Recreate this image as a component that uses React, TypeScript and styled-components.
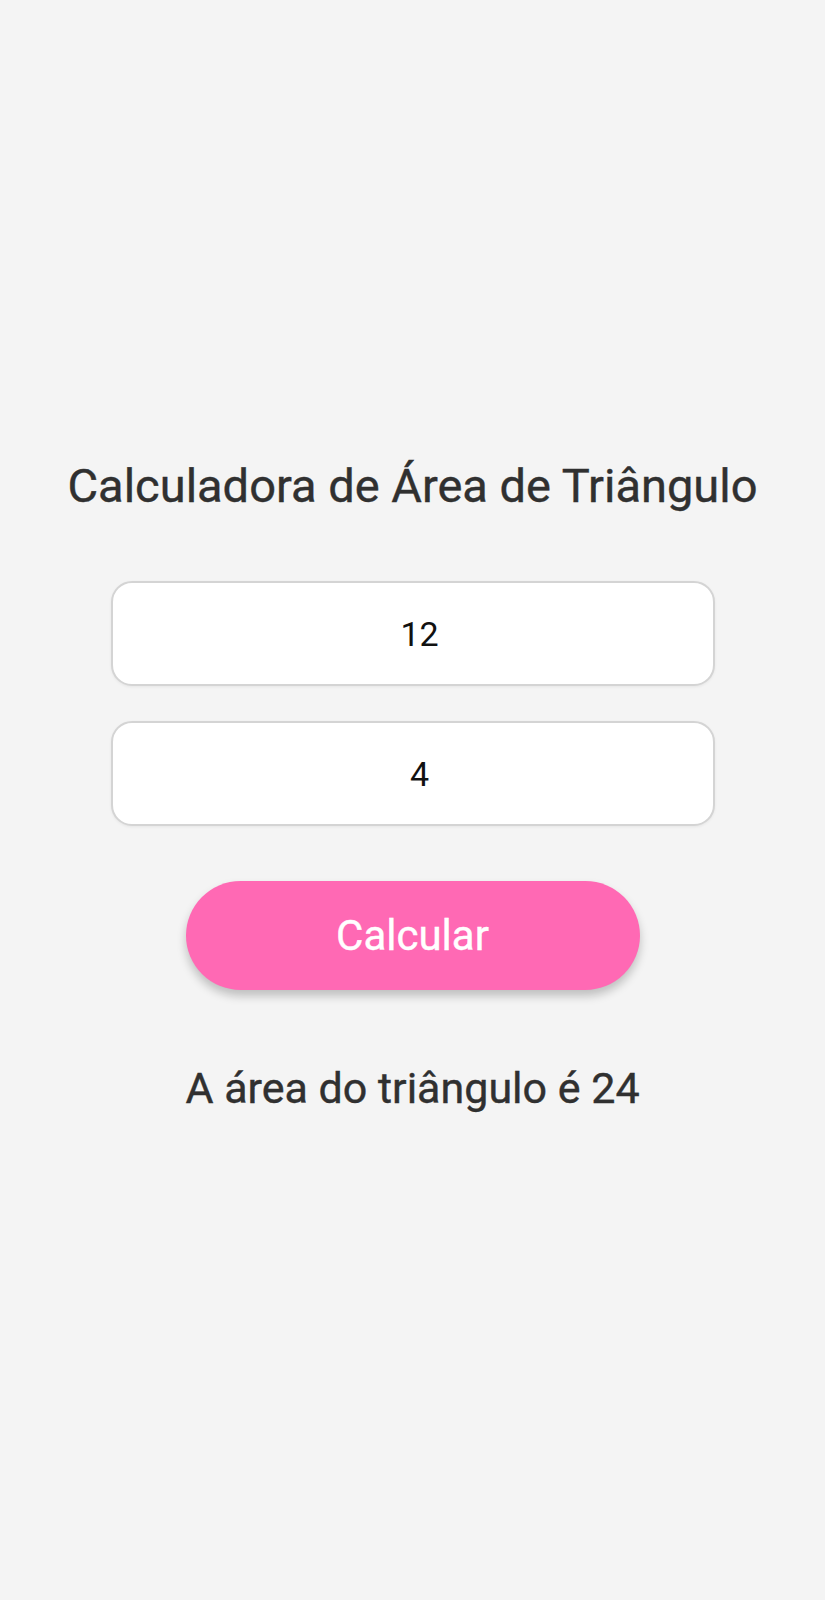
import React, { useState } from "react";
import styled, { createGlobalStyle } from "styled-components";

const GlobalStyle = createGlobalStyle`
  html, body {
    margin: 0;
    padding: 0;
    background: #f4f4f4;
  }
  body {
    font-family: Roboto, "Noto Sans", "Liberation Sans", sans-serif;
  }
`;

const Screen = styled.main`
  min-height: 1600px;
  width: 100%;
  box-sizing: border-box;
  padding-top: 458px;
  display: flex;
  flex-direction: column;
  align-items: center;
  background: #f4f4f4;
`;

const Title = styled.h1`
  margin: 0 0 67px;
  font-size: 47px;
  line-height: 56px;
  font-weight: 400;
  color: #303030;
  white-space: nowrap;
  -webkit-text-stroke: 0.4px #303030;
`;

const Fields = styled.div`
  display: flex;
  flex-direction: column;
  gap: 35px;
  margin-bottom: 55px;
`;

const Field = styled.input`
  box-sizing: border-box;
  width: 604px;
  height: 105px;
  border: 2px solid #d4d4d4;
  border-radius: 21px;
  background: #ffffff;
  box-shadow: 0 1px 3px rgba(0, 0, 0, 0.06);
  font-family: Roboto, "Noto Sans", sans-serif;
  font-size: 34px;
  color: #111111;
  text-align: center;
  outline: none;
  padding: 0 10px 0 24px;
`;

const CalcButton = styled.button`
  width: 454px;
  height: 109px;
  border: none;
  border-radius: 55px;
  background: #ff69b4;
  color: #ffffff;
  font-family: Roboto, "Noto Sans", sans-serif;
  font-size: 42px;
  font-weight: 400;
  -webkit-text-stroke: 0.4px #ffffff;
  box-shadow: 0 6px 10px rgba(0, 0, 0, 0.22);
  cursor: pointer;
  margin-bottom: 72px;
`;

const Result = styled.p`
  margin: 0;
  font-size: 43px;
  line-height: 52px;
  font-weight: 400;
  color: #303030;
  white-space: nowrap;
  -webkit-text-stroke: 0.4px #303030;
`;

export default function App() {
  const [base, setBase] = useState("12");
  const [height, setHeight] = useState("4");
  const [area, setArea] = useState<number | null>(24);

  const calcular = () => {
    const b = parseFloat(base);
    const h = parseFloat(height);
    if (!isNaN(b) && !isNaN(h)) setArea((b * h) / 2);
  };

  return (
    <>
      <GlobalStyle />
      <Screen>
        <Title>Calculadora de Área de Triângulo</Title>
        <Fields>
          <Field value={base} onChange={(e) => setBase(e.target.value)} inputMode="numeric" />
          <Field value={height} onChange={(e) => setHeight(e.target.value)} inputMode="numeric" />
        </Fields>
        <CalcButton onClick={calcular}>Calcular</CalcButton>
        {area !== null && <Result>A área do triângulo é {area}</Result>}
      </Screen>
    </>
  );
}
